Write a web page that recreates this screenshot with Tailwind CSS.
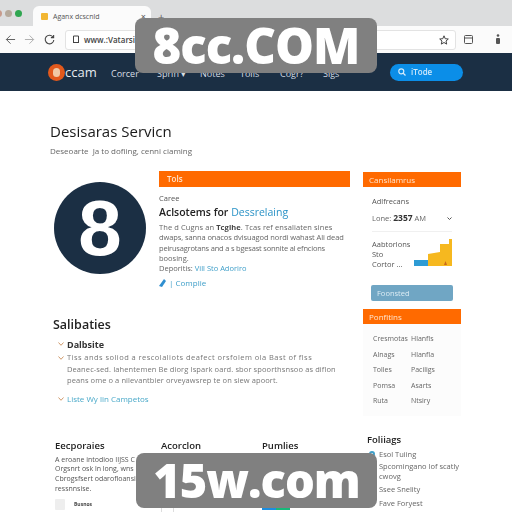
<!doctype html>
<html lang="en">
<head>
<meta charset="utf-8">
<script src="https://cdn.jsdelivr.net/npm/@tailwindcss/browser@4"></script>
</head>
<body class="bg-white">
<div class="relative w-[512px] h-[512px] overflow-hidden bg-white font-['Open_Sans','Liberation_Sans',sans-serif] text-[#333]">
  <div class="blur-[0.35px]">
    <!-- tab strip -->
    <div class="h-[26px] bg-[#dcddde] flex items-end relative">
      <div class="absolute left-[-5px] top-[10px] flex gap-[3px]">
        <span class="w-[7px] h-[7px] rounded-full bg-[#c79b8c]"></span>
        <span class="w-[7px] h-[7px] rounded-full bg-[#b5a99b]"></span>
        <span class="w-[7px] h-[7px] rounded-full bg-[#2fa650]"></span>
      </div>
      <div class="ml-[33px] w-[118px] h-[20px] bg-[#fbfbfb] rounded-t-[6px] flex items-center pl-[8px] pr-[5px]">
        <span class="w-[7px] h-[7px] bg-[#f2b632] rounded-[1px]"></span>
        <span class="ml-[5px] text-[7px] text-[#555] leading-none">Aganx dcscnld</span>
        <span class="ml-auto text-[9px] text-[#555] leading-none">×</span>
      </div>
      <span class="ml-[7px] mb-[4px] text-[11px] text-[#666] leading-none">+</span>
    </div>
    <!-- toolbar -->
    <div class="h-[27px] bg-[#fbfbfb] flex items-center">
      <svg class="ml-[5px] w-[11px] h-[11px]" viewBox="0 0 12 12" fill="none" stroke="#555" stroke-width="1"><path d="M11 6H1.5M6 1.5 1.5 6 6 10.5"/></svg>
      <svg class="ml-[8px] w-[11px] h-[11px]" viewBox="0 0 12 12" fill="none" stroke="#aaa" stroke-width="1"><path d="M1 6h9.500M6 1.500 10.500 6 6 10.500"/></svg>
      <svg class="ml-[9px] w-[11px] h-[11px]" viewBox="0 0 12 12" fill="none" stroke="#444" stroke-width="1.200"><path d="M10 3.500A4.700 4.700 0 1 0 10.700 6.500M10.500 1v3h-3"/></svg>
      <div class="ml-[10px] w-[391px] h-[20px] bg-white border border-[#e3e3e3] rounded-[3px] flex items-center pl-[6px] pr-[6px]">
        <svg class="w-[8px] h-[9px]" viewBox="0 0 8 9" fill="none" stroke="#444" stroke-width="1"><path d="M1.500 1h5v6.500h-5zM1 7.500h6"/></svg>
        <span class="ml-[4px] text-[8px] font-semibold text-[#444] leading-none">www.:Vatarsin</span>
        <svg class="ml-auto w-[10px] h-[10px]" viewBox="0 0 10 10" fill="none" stroke="#444" stroke-width="1"><path d="M5 .8 6.200 3.700 9.300 4 7 6 7.700 9.100 5 7.500 2.300 9.100 3 6 .7 4 3.800 3.700z"/></svg>
      </div>
      <svg class="ml-[8px] w-[9px] h-[9px]" viewBox="0 0 9 9" fill="none" stroke="#555" stroke-width="1"><rect x=".5" y=".5" width="8" height="8" rx="1"/><path d="M.5 3h8"/></svg>
      <svg class="ml-[22px] w-[6px] h-[11px]" viewBox="0 0 6 11" fill="#555"><circle cx="3" cy="1.500" r="1.300"/><rect x="1" y="4" width="4" height="6" rx="1"/></svg>
    </div>
    <!-- nav -->
    <nav class="h-[38px] bg-[#1b2f44] flex items-center text-[#d7dde3] text-[9px]">
      <div class="ml-[48px] w-[17px] h-[17px] rounded-full bg-[#e2591c] flex items-center justify-center">
        <span class="w-[7px] h-[9px] rounded-full bg-[#f1c9a5]"></span>
      </div>
      <span class="w-[46px] text-[13px] leading-none text-[#e6ebef]">ccam</span>
      <span class="w-[46px] pt-[3px]">Corcer</span>
      <span class="w-[43px] pt-[3px]">Sprin ▾</span>
      <span class="w-[40px] pt-[3px]">Notes</span>
      <span class="w-[40px] pt-[3px]">Tolis</span>
      <span class="w-[43px] pt-[3px]">Cogr?</span>
      <span class="w-[67px] pt-[3px]">Sigs</span>
      <div class="w-[73px] h-[17px] rounded-full bg-[#0b8ee8] flex items-center pl-[8px] text-[8px] text-[#cfe9fb]">
        <svg class="w-[8px] h-[8px]" viewBox="0 0 8 8" fill="none" stroke="#d5ecfc" stroke-width="1.200"><circle cx="3.300" cy="3.300" r="2.500"/><path d="m5 5 2.500 2.500"/></svg>
        <span class="ml-[5px] font-semibold">iTode</span>
      </div>
    </nav>
    <!-- main -->
    <main class="flex pl-[50px]">
      <div class="w-[300px] shrink-0">
        <h1 class="mt-[30px] h-[20px] text-[15px] leading-[20px] font-medium text-[#1a1a1a]">Desisaras Servicn</h1>
        <p class="mt-[3px] text-[8px] leading-[14px] text-[#666]">Deseoarte &nbsp;Ja to dofiing, cenni ciaming</p>
        <div class="mt-[13px] flex">
          <div class="mt-[11px] ml-[4px] w-[92px] h-[92px] rounded-full bg-[#1b2f44] flex items-center justify-center shrink-0">
            <span class="text-[78px] leading-none font-bold text-white font-['Liberation_Sans',sans-serif]">8</span>
          </div>
          <article class="ml-[13px] flex-1">
            <div class="h-[16px] bg-[#ff6a00] pl-[8px] text-[8px] leading-[16px] font-semibold text-[#ffe6cf]">Tols</div>
            <p class="mt-[6px] text-[7.500px] leading-[10px] text-[#555]">Caree</p>
            <h2 class="mt-[2px] text-[10.500px] leading-[14px] font-semibold text-[#222]">Aclsotems for <span class="font-normal text-[#2b93c7]">Dessrelaing</span></h2>
            <p class="mt-[3px] text-[7.500px] leading-[10.250px] text-[#666] whitespace-nowrap"><span class="tracking-[0.1px]">The d Cugns an <b class="text-[#444]">Tcgihe</b>. Tcas ref ensaliaten sines</span><br><span class="tracking-[-0.1px]">dwaps, sanna onacos dvisuagod nordi wahast Ali dead</span><br><span class="tracking-[-0.2px]">peirusagrotans and a s bgesast sonnite al efncions</span><br>boosing.</p>
            <p class="text-[7.500px] leading-[10.250px] text-[#666]">Deporitis: <span class="text-[#3f9fc9]">Vill Sto Adoriro</span></p>
            <div class="mt-[4px] flex items-center text-[8px] leading-[12px] text-[#3f9fc9]">
              <svg class="w-[7px] h-[8px]" viewBox="0 0 7 8" fill="#2f8fd0"><path d="M5 0 7 2 3 8 0 7z"/></svg>
              <span class="ml-[3px]">| Complie</span>
            </div>
          </article>
        </div>
        <h2 class="mt-[28px] ml-[3px] text-[12.500px] leading-[16px] font-semibold text-[#222]">Salibaties</h2>
        <div class="ml-[8px] mt-[4px] text-[8px]">
          <div class="flex items-center h-[14px]"><svg class="w-[9px] h-[4px]" viewBox="0 0 9 4" fill="none" stroke="#cf9a6c" stroke-width="1"><path d="M.5.500 3 3.300 5.500.500"/></svg><b class="text-[9px] font-bold text-[#333]">Dalbsite</b></div>
          <div class="flex mt-[1px]"><svg class="w-[9px] h-[4px] mt-[4px] shrink-0" viewBox="0 0 9 4" fill="none" stroke="#cf9a6c" stroke-width="1"><path d="M.5.500 3 3.300 5.500.500"/></svg><p class="text-[7.500px] leading-[11.500px] text-[#777] whitespace-nowrap"><span class="tracking-[0.45px]">Tiss ands soliod a rescolaliots deafect orsfolem ola Bast of flss</span><br><span class="tracking-[0.1px]">Deanec-sed. Iahentemen Be diorg Ispark oard. sbor spoorthsnsoo as diflon</span><br><span class="tracking-[0.08px]">peans ome o a nilevantbier orveyawsrep te on siew apoort.</span></p></div>
          <div class="flex mt-[6px] items-center"><svg class="w-[9px] h-[4px]" viewBox="0 0 9 4" fill="none" stroke="#cf9a6c" stroke-width="1"><path d="M.5.500 3 3.300 5.500.500"/></svg><a class="text-[8px] leading-[12px] text-[#4aa9c9]">Liste Wy lin Campetos</a></div>
        </div>
        <div class="mt-[34px] ml-[5px] grid grid-cols-[106px_101px_1fr]">
          <div>
            <h3 class="text-[9.500px] leading-[14px] font-semibold text-[#222]">Eecporaies</h3>
            <p class="mt-[2px] text-[7px] leading-[9.600px] text-[#555] whitespace-nowrap">A eroane intodioo IIJSS C<br>Orgsnrt osk ln long, wns<br>Cbrogsfsert odarofloansio<br>ressnnsise.</p>
            <div class="mt-[6px] flex items-center">
              <span class="w-[10px] h-[11px] bg-[#eee] rounded-[1px]"></span>
              <span class="ml-[9px] text-[5px] font-bold text-[#444]">Busnos</span>
            </div>
          </div>
          <div>
            <h3 class="text-[9.500px] leading-[14px] font-semibold text-[#222]">Acorclon</h3>
            <div class="mt-[52px] w-[13px] h-[8px] border border-[#ddd] rounded-[1px]"></div>
          </div>
          <div>
            <h3 class="text-[9.500px] leading-[14px] font-semibold text-[#222]">Pumlies</h3>
            <div class="mt-[49px] w-[28px] h-[8px] bg-[linear-gradient(90deg,#1b8ee0_50%,#16b97a_50%)]"></div>
          </div>
        </div>
      </div>
      <aside class="ml-[13px] w-[98px] shrink-0">
        <div class="mt-[81px] h-[15px] bg-[#ff6a00] pl-[6px] text-[8px] leading-[15px] text-[#ffe6cf]">Cansilamrus</div>
        <div class="pl-[9px] pr-[9px]">
          <p class="mt-[9px] text-[7.500px] leading-[10px] text-[#555]">Adlfrecans</p>
          <div class="mt-[7px] pb-[8px] border-b border-[#f0f0f0] flex items-center text-[7.500px] leading-[10px] text-[#666]"><span>Lone: <b class="text-[#333] text-[8.500px]">2357</b> AM</span><svg class="ml-auto w-[5px] h-[3px]" viewBox="0 0 5 3" fill="none" stroke="#555"><path d="M.5.500 2.500 2.500 4.500.500"/></svg></div>
          <div class="mt-[7px] flex">
            <p class="text-[7.500px] leading-[10px] text-[#555]">Aabtorlons<br>Sto<br>Cortor ...</p>
            <svg class="ml-auto w-[38px] h-[27px]" viewBox="0 0 38 27"><path d="M0 27V21H14V27Z" fill="#2d9bd4"/><path d="M14 27V15L26 13V5H35V0H38V27Z" fill="#f6b81f"/><path d="M30 26 31.500 22 33 26Z" fill="#c96a1a"/></svg>
          </div>
          <div class="mt-[16px] -mx-[1px] h-[16px] rounded-[2px] bg-[#70a6c4] pl-[6px] text-[7.500px] leading-[16px] text-[#dcecf4]">Foonsted</div>
        </div>
        <div class="mt-[8px] h-[15px] bg-[#ff6a00] pl-[6px] text-[8px] leading-[15px] text-[#ffe6cf]">Ponfitins</div>
        <div class="bg-[#fcfcfc] h-[92px] pl-[10px] pt-[7px] grid grid-cols-[38px_1fr] auto-rows-[15.500px] text-[7px] leading-[15.500px] text-[#666]">
          <span>Cresmotas</span><span>Hlanfls</span>
          <span>Alnags</span><span>Hlanfla</span>
          <span>Tolles</span><span>Paciligs</span>
          <span>Pomsa</span><span>Asarts</span>
          <span>Ruta</span><span>Ntsiry</span>
        </div>
        <h3 class="mt-[17px] ml-[4px] text-[9.500px] leading-[14px] font-semibold text-[#222]">Foliiags</h3>
        <ul class="ml-[16px] text-[7.500px] leading-[9.500px] text-[#666] whitespace-nowrap">
          <li class="relative h-[14px] leading-[14px]"><span class="absolute left-[-10px] top-[4px] w-[6px] h-[6px] rounded-full border-2 border-[#3f9fc9]"></span>Esol Tuiing</li>
          <li class="mt-[1px]">Spcomingano lof scatly<br>cwovg</li>
          <li class="mt-[4px]">Ssee Snelity</li>
          <li class="mt-[4px]">Fave Foryest</li>
        </ul>
      </aside>
    </main>
  </div>
  <!-- watermarks -->
  <div class="absolute left-[135px] top-[18px] w-[242px] h-[55px] rounded-[8px] bg-[#808080] flex items-center justify-center text-[49px] font-extrabold tracking-[-1px] text-white leading-none font-['Open_Sans',sans-serif]">8cc.COM</div>
  <div class="absolute left-[136px] top-[453px] w-[241px] h-[55px] rounded-[8px] bg-[#808080] flex items-center justify-center text-[47px] font-extrabold tracking-[-1px] text-white leading-none font-['Open_Sans',sans-serif]">15w.com</div>
</div>
</body>
</html>
